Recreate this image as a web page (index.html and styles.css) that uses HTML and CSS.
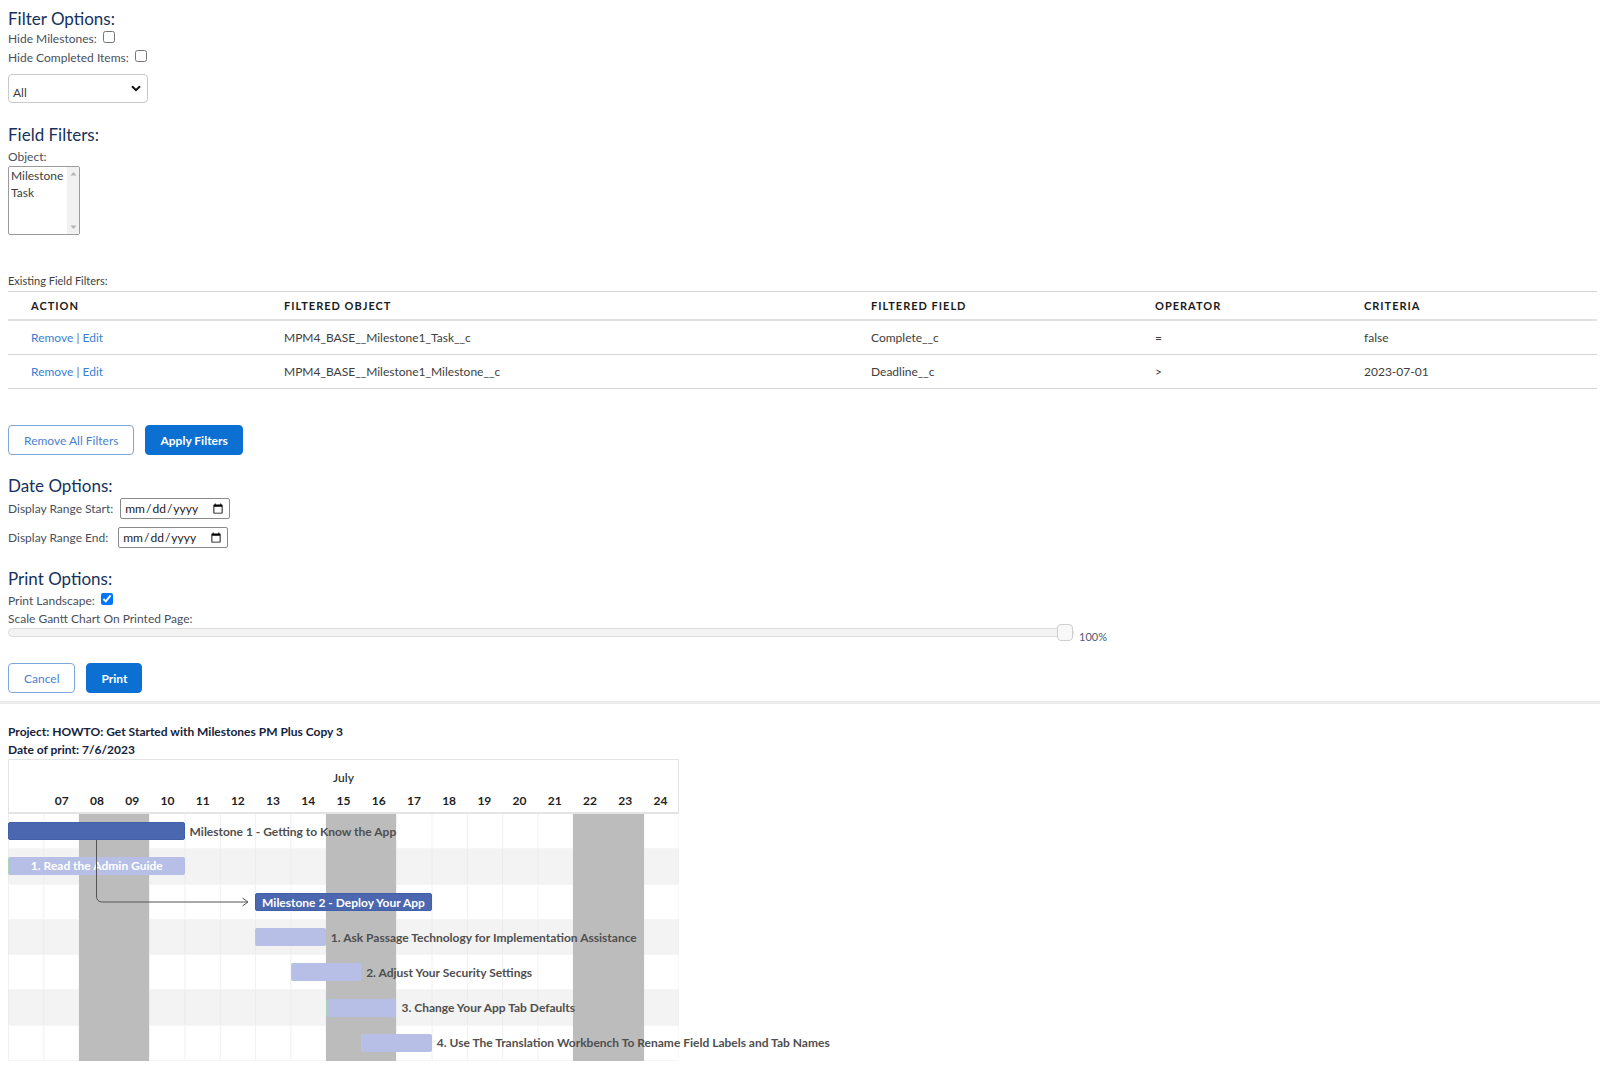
FILE: index.html
```html
<!DOCTYPE html>
<html>
  <head>
    <meta charset="utf-8" />
    <title>Print Gantt Chart</title>
    <link rel="stylesheet" href="styles.css">
  </head>
  <body>
    <div class="page">
      <!-- Filtres -->
      <h2 class="section-title">Filter Options:</h2>
      <label class="check-row">Hide Milestones: <input type="checkbox"></label>
      <label class="check-row">Hide Completed Items: <input type="checkbox"></label>
      <div class="select-wrap">
        <select class="select">
          <option>All</option>
        </select>
        <svg class="select-chevron" width="10" height="7" viewBox="0 0 10 7"><path d="M1 1.2 L5 5.2 L9 1.2" fill="none" stroke="#111" stroke-width="2"/></svg>
      </div>

      <h2 class="section-title field-title">Field Filters:</h2>
      <div class="field-label">Object:</div>
      <div class="listbox">
        <div class="listbox-items">
          <div>Milestone</div>
          <div>Task</div>
        </div>
        <div class="listbox-scroll">
          <svg width="7" height="5" viewBox="0 0 7 5"><path d="M0.5 4.5 L3.5 1 L6.5 4.5 Z" fill="#b5b5b5"/></svg>
          <svg width="7" height="5" viewBox="0 0 7 5"><path d="M0.5 0.5 L3.5 4 L6.5 0.5 Z" fill="#b5b5b5"/></svg>
        </div>
      </div>

      <div class="small-label">Existing Field Filters:</div>
      <table class="filter-table">
        <colgroup>
          <col class="col-action">
          <col class="col-object">
          <col class="col-field">
          <col class="col-operator">
          <col>
        </colgroup>
        <thead>
          <tr>
            <th>Action</th>
            <th>Filtered Object</th>
            <th>Filtered Field</th>
            <th>Operator</th>
            <th>Criteria</th>
          </tr>
        </thead>
        <tbody>
          <tr>
            <td><a href="#">Remove</a> <span class="sep">|</span> <a href="#">Edit</a></td>
            <td>MPM4_BASE__Milestone1_Task__c</td>
            <td>Complete__c</td>
            <td>=</td>
            <td>false</td>
          </tr>
          <tr>
            <td><a href="#">Remove</a> <span class="sep">|</span> <a href="#">Edit</a></td>
            <td>MPM4_BASE__Milestone1_Milestone__c</td>
            <td>Deadline__c</td>
            <td>&gt;</td>
            <td>2023-07-01</td>
          </tr>
        </tbody>
      </table>

      <div class="button-row filter-buttons">
        <button class="btn btn-neutral">Remove All Filters</button>
        <button class="btn btn-brand">Apply Filters</button>
      </div>

      <!-- Dates -->
      <h2 class="section-title date-title">Date Options:</h2>
      <label class="date-row">Display Range Start: <input class="date-input" type="date"></label>
      <label class="date-row">Display Range End: <input class="date-input end" type="date"></label>

      <!-- Impression -->
      <h2 class="section-title print-title">Print Options:</h2>
      <label class="check-row">Print Landscape: <input type="checkbox" checked></label>
      <div class="check-row scale-label">Scale Gantt Chart On Printed Page:</div>
      <div class="range-row">
        <input class="range" type="range" min="10" max="100" value="100">
        <span class="range-value">100%</span>
      </div>

      <div class="button-row print-buttons">
        <button class="btn btn-neutral">Cancel</button>
        <button class="btn btn-brand">Print</button>
      </div>
    </div>

    <hr class="divider">

    <div class="page">
      <div class="project-title">Project: HOWTO: Get Started with Milestones PM Plus Copy 3</div>
      <div class="project-title">Date of print: 7/6/2023</div>

      <div class="gantt">
        <div class="gantt-header">
          <div class="gantt-month">July</div>
          <div class="gantt-days">
            <span></span><span>07</span><span>08</span><span>09</span><span>10</span><span>11</span><span>12</span><span>13</span><span>14</span><span>15</span><span>16</span><span>17</span><span>18</span><span>19</span><span>20</span><span>21</span><span>22</span><span>23</span><span>24</span>
          </div>
        </div>

        <div class="gantt-body">
          <!-- week-end -->
          <div class="weekend" style="left: 70.6px"></div>
          <div class="weekend" style="left: 317.8px"></div>
          <div class="weekend" style="left: 565px"></div>

          <svg class="dependency" width="260" height="100" viewBox="0 0 260 100">
            <path d="M88.5 26 V82 Q88.5 88 94.5 88 H239.5" fill="none" stroke="#555" stroke-width="1"/>
            <path d="M234.5 84 L240 88 L234.5 92" fill="none" stroke="#555" stroke-width="1"/>
          </svg>

          <div class="gantt-row">
            <div class="bar milestone" style="grid-column: 1 / 6"></div>
            <div class="bar-label" style="grid-column: 6 / 20">Milestone 1 - Getting to Know the App</div>
          </div>
          <div class="gantt-row alt">
            <div class="bar task inside" style="grid-column: 1 / 6">1. Read the Admin Guide</div>
          </div>
          <div class="gantt-row">
            <div class="bar milestone inside" style="grid-column: 8 / 13">Milestone 2 - Deploy Your App</div>
          </div>
          <div class="gantt-row alt">
            <div class="bar task" style="grid-column: 8 / 10"></div>
            <div class="bar-label" style="grid-column: 10 / 20">1. Ask Passage Technology for Implementation Assistance</div>
          </div>
          <div class="gantt-row">
            <div class="bar task" style="grid-column: 9 / 11"></div>
            <div class="bar-label" style="grid-column: 11 / 20">2. Adjust Your Security Settings</div>
          </div>
          <div class="gantt-row alt">
            <div class="bar task" style="grid-column: 10 / 12"></div>
            <div class="bar-label" style="grid-column: 12 / 20">3. Change Your App Tab Defaults</div>
          </div>
          <div class="gantt-row">
            <div class="bar task" style="grid-column: 11 / 13"></div>
            <div class="bar-label" style="grid-column: 13 / 20">4. Use The Translation Workbench To Rename Field Labels and Tab Names</div>
          </div>
        </div>
      </div>
    </div>
  </body>
</html>
```

FILE: styles.css
```css
body {
  margin: 0;
  padding-top: 8px;
  font-family: "Lato", "Open Sans", sans-serif;
  font-size: 12px;
  color: #3e3e3c;
  background: #ffffff;
}

.page {
  padding: 0 3px 0 8px;
}

.section-title {
  margin: 0;
  font-size: 17px;
  font-weight: 400;
  line-height: 21px;
  color: #16325c;
}

.field-title {
  margin-top: 21px;
}
.date-title {
  margin-top: 20px;
}
.print-title {
  margin-top: 20px;
}

.check-row {
  display: flex;
  align-items: center;
  line-height: 19px;
  color: #4a4f5a;
}
.check-row input {
  margin: -4px 0 0 6px;
  width: 12px;
  height: 12px;
}

.select-wrap {
  position: relative;
  width: 140px;
  margin-top: 7px;
}
.select {
  appearance: none;
  width: 140px;
  height: 29px;
  padding: 7px 0 0 4px;
  border: 1px solid #c9c9c9;
  border-radius: 4px;
  background: #ffffff;
  font-family: inherit;
  font-size: 12px;
  color: #3e3e3c;
}
.select-chevron {
  position: absolute;
  right: 7px;
  top: 11px;
}

.field-label {
  margin-top: 2px;
  line-height: 19px;
  color: #4a4f5a;
}

.listbox {
  display: flex;
  width: 72px;
  height: 69px;
  box-sizing: border-box;
  border: 1px solid #9b9b9b;
  border-radius: 2px;
}
.listbox-items {
  flex: 1;
  padding: 0 0 0 2px;
  line-height: 17px;
  color: #3e3e3c;
}
.listbox-scroll {
  width: 12px;
  background: #f1f1f1;
  display: flex;
  flex-direction: column;
  justify-content: space-between;
  align-items: center;
  padding: 4px 0 4px;
}

.small-label {
  margin-top: 38px;
  font-size: 11px;
  line-height: 16px;
  color: #3e3e3c;
}

.filter-table {
  margin-top: 2px;
  width: 100%;
  border-collapse: collapse;
  table-layout: fixed;
  border-top: 1px solid #d4d4d4;
}
.col-action {
  width: 268px;
}
.col-object {
  width: 587px;
}
.col-field {
  width: 284px;
}
.col-operator {
  width: 209px;
}
.filter-table th {
  height: 27px;
  padding: 0 8px;
  text-align: left;
  font-size: 11px;
  font-weight: 700;
  letter-spacing: 1px;
  text-transform: uppercase;
  color: #1b1b1b;
  border-bottom: 2px solid #e2e2e2;
}
.filter-table td {
  height: 33px;
  padding: 0 8px;
  color: #3e3e3c;
  border-bottom: 1px solid #d4d4d4;
}
.filter-table th:first-child,
.filter-table td:first-child {
  padding-left: 23px;
}
.filter-table a {
  color: #3b7fd6;
  text-decoration: none;
}
.sep {
  color: #6b6b6b;
}

.button-row {
  display: flex;
  gap: 11px;
}
.filter-buttons {
  margin-top: 36px;
}
.print-buttons {
  margin-top: 22px;
}
.btn {
  height: 30px;
  padding: 0 14px;
  border-radius: 4px;
  font-family: inherit;
  font-size: 12px;
  cursor: pointer;
}
.btn-neutral {
  background: #ffffff;
  border: 1px solid #7ea6dc;
  color: #4d7fcf;
}
.btn-neutral:first-child {
  padding: 0 15px;
}
.btn-brand {
  background: #0b70d2;
  border: 1px solid #0b70d2;
  color: #ffffff;
  font-weight: 700;
}

.date-row {
  display: flex;
  align-items: center;
  gap: 7px;
  margin-top: 2px;
  color: #4a4f5a;
}
.date-row + .date-row {
  margin-top: 8px;
}
.date-input {
  width: 110px;
  height: 21px;
  box-sizing: border-box;
  padding: 0 3px;
  border: 1px solid #8a8a8a;
  border-radius: 2px;
  font-family: inherit;
  font-size: 12px;
  color: #222222;
}
.date-input.end {
  margin-left: 3px;
}

.print-title + .check-row {
  margin-top: 2px;
}
.scale-label {
  line-height: 17px;
}

.range-row {
  display: flex;
  align-items: flex-end;
  margin-top: -3px;
  height: 17px;
}
.range {
  appearance: none;
  -webkit-appearance: none;
  width: 1066px;
  height: 17px;
  margin: 0;
  background: transparent;
}
.range::-webkit-slider-runnable-track {
  height: 9px;
  background: #f3f3f3;
  border: 1px solid #dcdcdc;
  border-radius: 5px;
}
.range::-webkit-slider-thumb {
  -webkit-appearance: none;
  width: 16px;
  height: 17px;
  margin-top: -5px;
  background: #f8f8f8;
  border: 1px solid #cfcfcf;
  border-radius: 4px;
}
.range-value {
  margin: 0 0 -3px 5px;
  line-height: 14px;
  font-size: 11px;
  color: #4a5a78;
}

.divider {
  margin: 8px 0 0;
  border: 0;
  border-top: 3px solid #ececec;
}

.project-title {
  font-weight: 700;
  line-height: 18px;
  color: #15233d;
}
.project-title:first-of-type {
  margin-top: 19px;
}

/* gantt */
.gantt {
  width: 671px;
}
.gantt-header {
  height: 55px;
  box-sizing: border-box;
  border: 1px solid #e4e4e4;
  border-bottom-width: 2px;
  padding-top: 8px;
  font-weight: 700;
  color: #1f1f1f;
}
.gantt-month {
  text-align: center;
  line-height: 20px;
  font-weight: 600;
  color: #333333;
}
.gantt-days {
  display: grid;
  grid-template-columns: repeat(19, 1fr);
  margin-top: 3px;
  line-height: 20px;
  text-align: center;
}

.gantt-body {
  position: relative;
  z-index: 0;
}
.gantt-row {
  display: grid;
  grid-template-columns: repeat(19, 1fr);
  align-items: center;
  height: 35.3px;
  background-color: #ffffff;
  background-image: linear-gradient(to right, #f0f0f0 1px, transparent 1px);
  background-size: 35.3px 100%;
  border-bottom: 1px solid #f5f5f5;
  box-sizing: border-box;
}
.gantt-row.alt {
  background-color: #f3f3f3;
  background-image: linear-gradient(to right, #ebebeb 1px, transparent 1px);
}

.weekend {
  position: absolute;
  top: 0;
  bottom: 0;
  width: 70.6px;
  background: #bcbcbc;
  z-index: 1;
}
.dependency {
  position: absolute;
  left: 0;
  top: 0;
  z-index: 3;
  overflow: visible;
}

.bar {
  position: relative;
  z-index: 2;
  height: 18px;
  border-radius: 2px;
  box-sizing: border-box;
}
.bar.milestone {
  background: #4b67b0;
  border: 1px solid #4260aa;
}
.bar.task {
  background: #b7bfe6;
  border-left: 1px solid #a8d8b0;
}
.bar.inside {
  text-align: center;
  line-height: 18px;
  font-weight: 700;
  color: #ffffff;
  white-space: nowrap;
}
.bar-label {
  position: relative;
  z-index: 2;
  padding-left: 5px;
  font-weight: 700;
  color: #4f4f4f;
  white-space: nowrap;
}
```
